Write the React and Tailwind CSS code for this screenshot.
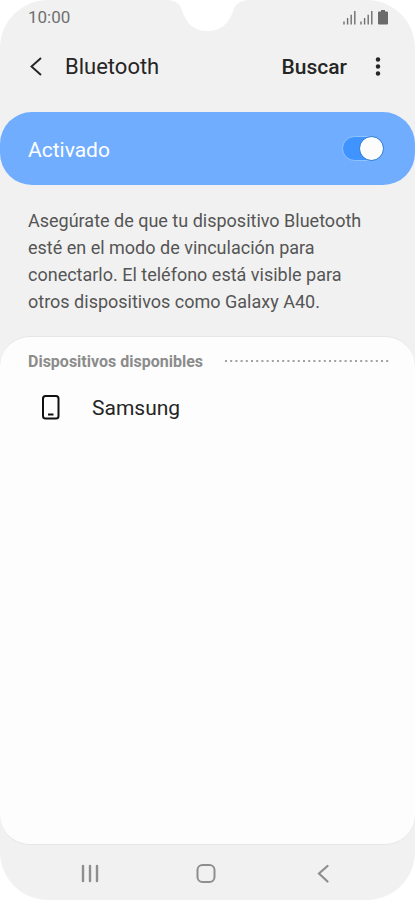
import { useState } from "react";

const devices = [{ id: 1, name: "Samsung" }];

function SignalIcon() {
  return (
    <svg width="13" height="15" viewBox="0 0 13 15" stroke="#6f6f6f" strokeWidth="1.4" aria-hidden="true">
      <path d="M1 14.500v-3M4.600 14.500V8M8.200 14.500V4.800M11.800 14.500V1" />
    </svg>
  );
}

function StatusBar() {
  return (
    <div className="relative flex h-[34px] items-center justify-between pl-7 pr-[27px]">
      <span className="text-[17px] leading-6 text-[#707070]">10:00</span>
      <svg className="absolute left-1/2 top-0 -translate-x-1/2" width="80" height="32" viewBox="0 0 80 32" aria-hidden="true">
        <path d="M0 0C8 1 12 4 14 10C18 24 26 31 39.500 31C53 31 61 24 65.500 10C67.500 4 72 1 80 0Z" fill="#fff" />
      </svg>
      <div className="flex items-center gap-1">
        <SignalIcon />
        <SignalIcon />
        <svg className="ml-px" width="10" height="15" viewBox="0 0 10 15" fill="#6b6b6b" aria-hidden="true">
          <path d="M3 0h4v1.500h2a1 1 0 0 1 1 1V13.500a1 1 0 0 1-1 1h-8a1 1 0 0 1-1-1V2.500a1 1 0 0 1 1-1h2z" />
        </svg>
      </div>
    </div>
  );
}

function Header() {
  return (
    <header className="flex h-16 items-center pt-0.5 pl-7 pr-8 text-[#252525]">
      <button type="button" aria-label="Atrás" className="flex w-[37px]">
        <svg width="16" height="20" viewBox="0 0 16 20" fill="none" stroke="currentColor" strokeWidth="1.9" aria-hidden="true">
          <path d="M13 1L3.500 9.500L13 18" />
        </svg>
      </button>
      <h1 className="flex-1 text-[22px] leading-7">Bluetooth</h1>
      <button type="button" className="text-[21px] leading-7 font-medium">
        Buscar
      </button>
      <button type="button" aria-label="Más opciones" className="ml-[26px]">
        <svg width="10" height="20" viewBox="0 0 10 20" fill="currentColor" aria-hidden="true">
          <circle cx="5" cy="2.500" r="2.200" />
          <circle cx="5" cy="9.500" r="2.200" />
          <circle cx="5" cy="16.500" r="2.200" />
        </svg>
      </button>
    </header>
  );
}

function NavBar() {
  return (
    <nav className="flex h-[55px] items-center justify-around pl-8 pr-[34px] text-[#8e8e8e]">
      <button type="button" aria-label="Recientes">
        <svg width="20" height="20" viewBox="0 0 20 20" fill="none" stroke="currentColor" strokeWidth="2.400" strokeLinecap="round" aria-hidden="true">
          <path d="M3 3v15M10 3v15M17 3v15" />
        </svg>
      </button>
      <button type="button" aria-label="Inicio">
        <svg width="20" height="20" viewBox="0 0 20 20" fill="none" stroke="currentColor" strokeWidth="2" aria-hidden="true">
          <rect x="1.500" y="2" width="17" height="17" rx="5" />
        </svg>
      </button>
      <button type="button" aria-label="Volver">
        <svg width="20" height="20" viewBox="0 0 20 20" fill="none" stroke="currentColor" strokeWidth="2.200" strokeLinecap="round" aria-hidden="true">
          <path d="M14.500 3L6 10.500L14.500 18.500" />
        </svg>
      </button>
    </nav>
  );
}

export default function App() {
  const [enabled, setEnabled] = useState(true);

  return (
    <div className="min-h-screen bg-white font-[Roboto,sans-serif]">
      <div className="flex min-h-screen flex-col rounded-[48px] bg-[#f1f1f1]">
        <StatusBar />
        <Header />

        <label className="mt-3.5 flex h-[73px] items-center justify-between rounded-[32px] bg-[#70adff] pl-7 pr-[31px]">
          <span className="pt-0.5 text-[21px] leading-7 text-white">Activado</span>
          <span className="relative flex">
            <input
              type="checkbox"
              role="switch"
              checked={enabled}
              onChange={(e) => setEnabled(e.target.checked)}
              className="peer h-[25px] w-[42px] appearance-none rounded-full border border-[#8fc3ff] bg-[#9ab8dd] checked:bg-[#4094ff]"
            />
            <span className="pointer-events-none absolute left-0 top-0 size-[25px] rounded-full border border-[#1f76d2] bg-[#fcfcfc] peer-checked:left-auto peer-checked:right-0" />
          </span>
        </label>

        <p className="px-7 pt-[22px] pb-[21px] text-lg leading-[27px] text-[#555]">
          Asegúrate de que tu dispositivo Bluetooth esté en el modo de vinculación para conectarlo. El teléfono está visible para otros dispositivos como Galaxy A40.
        </p>

        <main className="flex-1 rounded-[30px] border-y border-[#e6e6e6] bg-[#fdfdfd] pl-7 pr-[26px] pt-[11px]">
          <div className="flex items-center gap-5">
            <h2 className="pt-0.5 text-base leading-6 font-bold text-[#8c8c8c]">Dispositivos disponibles</h2>
            <svg className="h-[2px] min-w-0 flex-1" aria-hidden="true">
              <line x1="2" y1="1" x2="100%" y2="1" stroke="#a0a0a0" strokeWidth="2" strokeDasharray="2 3.200" />
            </svg>
          </div>
          <ul>
            {devices.map((d) => (
              <li key={d.id}>
                <button type="button" className="flex w-full items-center gap-8 py-5 pl-3 text-left text-[21px] leading-7 text-[#252525]">
                  <svg width="20" height="26" viewBox="0 0 20 26" fill="none" stroke="#111" strokeWidth="2" aria-hidden="true">
                    <rect x="3" y="1" width="15.500" height="22.500" rx="2.500" />
                    <path d="M8 19.500h5.500" />
                  </svg>
                  {d.name}
                </button>
              </li>
            ))}
          </ul>
        </main>

        <NavBar />
      </div>
    </div>
  );
}
